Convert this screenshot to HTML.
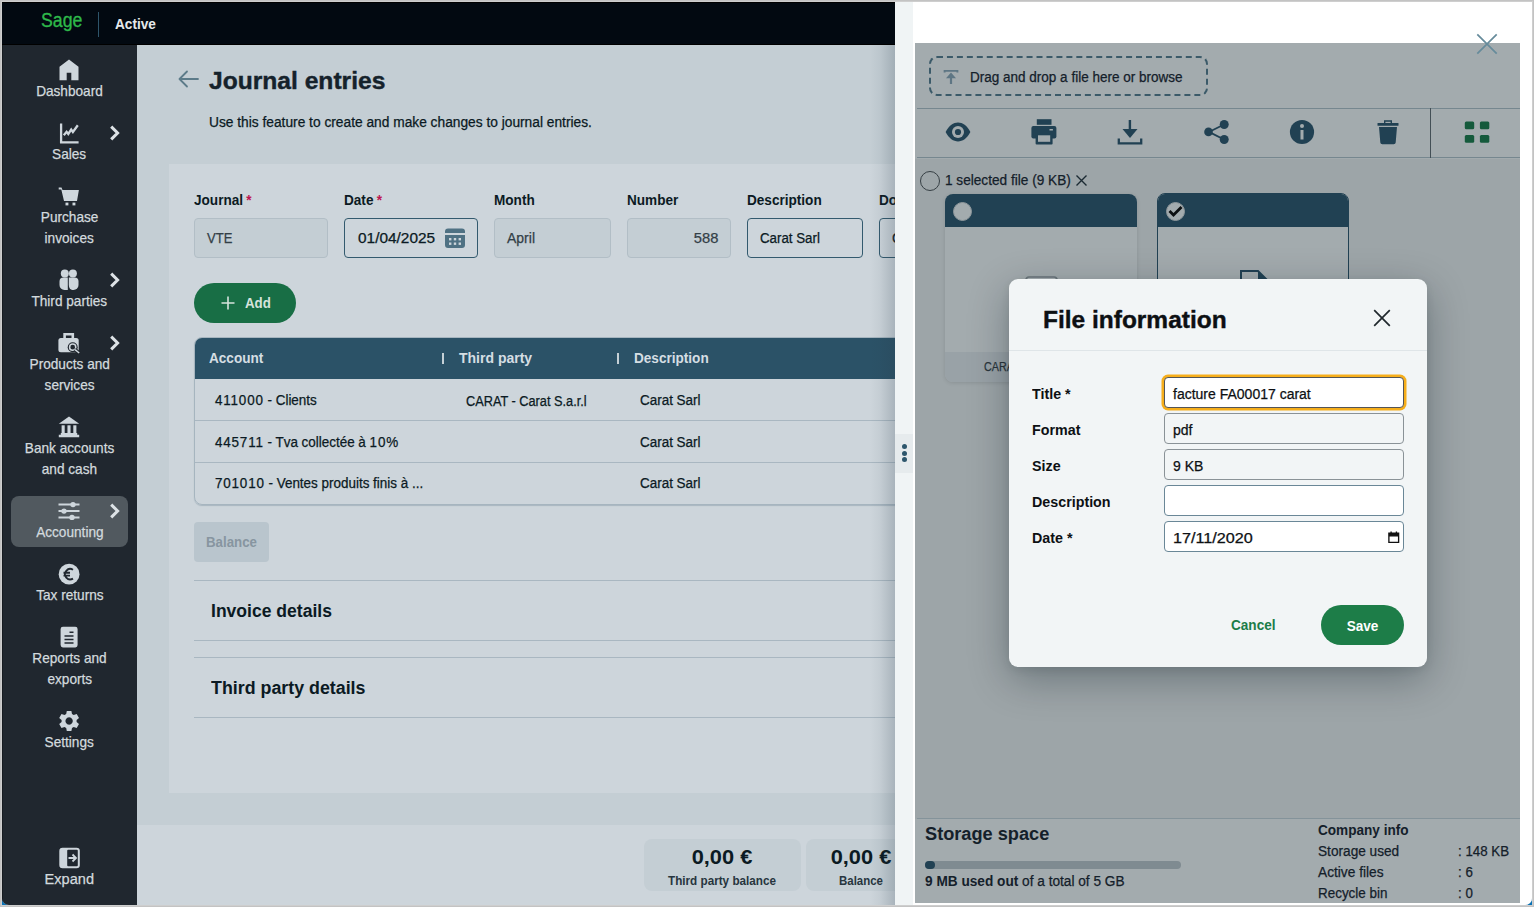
<!DOCTYPE html>
<html lang="en">
<head>
<meta charset="utf-8">
<title>Journal entries</title>
<style>
*{box-sizing:border-box;margin:0;padding:0}
html,body{width:1534px;height:907px;overflow:hidden;background:#c3c3c3}
body{font-family:"Liberation Sans",sans-serif;font-size:14px;color:#0b1a23;position:relative}
.abs{position:absolute}
.t{position:absolute;white-space:nowrap;transform-origin:0 50%;line-height:1}
.b{font-weight:bold}
#frame{position:absolute;left:1px;top:1px;width:1532px;height:905px;background:#cecece}
#app{position:absolute;left:2px;top:2px;width:1530px;height:903px;background:#c4ced4;overflow:hidden;border-radius:0 0 7px 7px}
.bc{position:absolute;top:897px;width:8px;height:8px;background:#0a72b5}
/* top bar */
#topbar{position:absolute;left:0;top:0;width:893px;height:43px;background:#020911;border-bottom:1px solid #000;border-top:1px solid #000}
/* sidebar */
#side{position:absolute;left:0;top:43px;width:135px;height:860px;background:#20272f;box-shadow:inset 1px 0 0 #161b20}
.nav{position:absolute;left:9px;width:117px;height:51px;border-radius:8px}
.nav.two{height:72px}
.nav.sel{background:#51595f}
.nav svg.ic{position:absolute;left:46.2px;top:3px;width:24px;height:24px;fill:#ced6dc}
.nav svg.ch{position:absolute;left:98px;top:7px;width:12px;height:16px}
.nav .lb{position:absolute;left:-9px;width:135px;top:26px;text-align:center;color:#d3dade;font-size:14.5px;line-height:21px}
.nav .lb span{-webkit-text-stroke:.25px currentColor;display:inline-block;transform:scaleX(.94);white-space:nowrap}

/* main */
#main{position:absolute;left:135px;top:43px;width:760px;height:860px;background:#c4ced4;overflow:hidden}
#card{position:absolute;left:32px;top:119px;width:760px;height:629px;background:#cdd5db}
#foot{position:absolute;left:0;top:780px;width:760px;height:80px;background:#cdd5db}
.tx{position:absolute;white-space:nowrap;height:20px;line-height:20px;margin-top:-10px;transform-origin:0 50%;transform:scaleX(var(--k,1))}
.tx{-webkit-text-stroke:.25px currentColor}
.tx.b,.tx b{-webkit-text-stroke:0}
.tx.hv{-webkit-text-stroke:.4px currentColor}
.tx.c{transform-origin:50% 50%;text-align:center}
.tx.r{transform-origin:100% 50%;text-align:right}
.inp{position:absolute;height:40px;border-radius:4px;border:1px solid #335a6e;background:#cdd5db}
.inp.dis{border-color:#b2bec6;background:#c4ced4}
.hl{position:absolute;height:1px;background:#a9b7c1}
.dg{letter-spacing:.85px}
.red{color:#bd1550;margin-left:-.5px}

#tbl{position:absolute;left:25px;top:173px;width:760px;height:168px;border:1px solid #a6b5bf;border-radius:8px;overflow:hidden;box-shadow:0 1px 1px rgba(60,90,110,.25)}
#tbl .hd{position:absolute;left:-1px;top:-1px;width:762px;height:42px;background:#2b5267;color:#d5dee3}
#tbl .rl{position:absolute;left:0;width:760px;height:1px;background:#a9b7c1}

/* drawer */
#drawer{position:absolute;left:893px;top:0;width:637px;height:903px;background:#fff}
#dshadow{position:absolute;left:868px;top:43px;width:25px;height:860px;background:linear-gradient(90deg,rgba(40,60,75,0) 0%,rgba(40,60,75,.05) 40%,rgba(40,60,75,.22) 100%)}
#strip{position:absolute;left:0;top:0;width:18px;height:903px;background:#f0f4f5}
#panel{position:absolute;left:20px;top:41px;width:605px;height:860px;background:#9da5a8;overflow:hidden;color:#14202a}
#ptop{position:absolute;left:0;top:0;width:605px;height:116px;background:#a3abae}
.pl{position:absolute;left:2px;width:603px;height:1px;background:#76878f}
.tb{position:absolute;top:78px;width:26px;height:26px;fill:#214153}
.fc{position:absolute;top:151px;width:192px;height:188px;border-radius:8px;background:#a3abae;overflow:hidden;box-shadow:0 1px 4px rgba(0,0,0,.12)}
.fc .h{position:absolute;left:0;top:0;width:100%;height:33px;background:#214153}
.fc .cap{position:absolute;left:0;bottom:0;width:100%;height:30px;background:#99a2a7}

/* modal */
#modal{position:absolute;left:114px;top:277px;width:418px;height:387.500px;background:#f2f5f6;border-radius:9px;box-shadow:0 12px 40px rgba(0,20,29,.32),0 3px 9px rgba(0,20,29,.08);color:#0d1013}
#modal .mi{position:absolute;left:155px;width:240px;height:31px;border:1px solid #6a8797;border-radius:4px;background:#fff}
#modal .mi.ro{background:#f2f5f6;border-color:#8a9297}
#modal .mi .tx{left:8px;top:15.500px}
#modal .ml{left:22.500px}
</style>
</head>
<body>
<div id="frame"></div>
<div class="bc" style="left:2px"></div><div class="bc" style="left:1524px"></div>
<div id="app">
  <div id="main">
    <svg class="abs" style="left:40px;top:24px;width:22px;height:20px" viewBox="0 0 22 20"><path d="M10 2.5 L2.5 10 L10 17.5 M2.5 10 H21" fill="none" stroke="#5c7b89" stroke-width="1.8" stroke-linecap="round" stroke-linejoin="round"/></svg>
    <div class="tx b hv" style="left:72px;top:36.400px;font-size:24px;height:30px;line-height:30px;margin-top:-15px;--k:1.025;color:#15222b">Journal entries</div>
    <div class="tx" style="left:72px;top:77px;--k:.982">Use this feature to create and make changes to journal entries.</div>
    <div id="card">
      <div class="tx b" style="left:25px;top:36px;--k:.97">Journal <span class="red">*</span></div>
      <div class="tx b" style="left:175px;top:36px;--k:.97">Date <span class="red">*</span></div>
      <div class="tx b" style="left:325px;top:36px;--k:.97">Month</div>
      <div class="tx b" style="left:458px;top:36px;--k:.97">Number</div>
      <div class="tx b" style="left:578px;top:36px;--k:.97">Description</div>
      <div class="tx b" style="left:710px;top:36px;--k:.97">Document</div>
      <div class="inp dis" style="left:25px;top:54px;width:134px"><div class="tx" style="left:12px;top:19px;color:#333f47;--k:.93">VTE</div></div>
      <div class="inp" style="left:175px;top:54px;width:134px"><div class="tx" style="left:12.500px;top:19px;--k:1.1">01/04/2025</div>
        <svg class="abs" style="left:100px;top:9px;width:20px;height:20px" viewBox="0 0 20 20"><path d="M3 0.5h14a3 3 0 0 1 3 3V5H0V3.500a3 3 0 0 1 3-3z M0 7h20v10a3 3 0 0 1-3 3H3a3 3 0 0 1-3-3z" fill="#4f7183"/><g fill="#cdd5db"><rect x="4" y="10" width="2.4" height="2.4"/><rect x="8.800" y="10" width="2.4" height="2.4"/><rect x="13.600" y="10" width="2.4" height="2.4"/><rect x="4" y="14.500" width="2.4" height="2.4"/><rect x="8.800" y="14.500" width="2.4" height="2.4"/><rect x="13.600" y="14.500" width="2.4" height="2.4"/></g></svg>
      </div>
      <div class="inp dis" style="left:325px;top:54px;width:117px"><div class="tx" style="left:12px;top:19px;color:#333f47">April</div></div>
      <div class="inp dis" style="left:458px;top:54px;width:104px"><div class="tx r" style="right:12px;top:19px;color:#333f47;--k:1.05">588</div></div>
      <div class="inp" style="left:578px;top:54px;width:116px"><div class="tx" style="left:12px;top:19px;--k:.95">Carat Sarl</div></div>
      <div class="inp" style="left:710px;top:54px;width:116px"><div class="tx" style="left:12px;top:19px">Carat</div></div>
      <div class="abs" style="left:25px;top:119px;width:102px;height:40px;border-radius:20px;background:#186e45">
        <svg class="abs" style="left:27px;top:13px;width:14px;height:14px" viewBox="0 0 14 14"><path d="M7 0.500V13.500M0.500 7H13.500" stroke="#d6e3dc" stroke-width="1.6" fill="none"/></svg>
        <div class="tx b" style="left:51px;top:20px;color:#d6e3dc;--k:.95">Add</div>
      </div>
      <div id="tbl">
        <div class="hd">
          <div class="tx b" style="left:14.500px;top:21px;--k:.97">Account</div>
          <div class="abs" style="left:248px;top:16px;width:2px;height:11px;background:#c5d0d6"></div>
          <div class="tx b" style="left:265px;top:21px;--k:1">Third party</div>
          <div class="abs" style="left:423px;top:16px;width:2px;height:11px;background:#c5d0d6"></div>
          <div class="tx b" style="left:440px;top:21px;--k:.97">Description</div>
        </div>
        <div class="tx" style="left:19.500px;top:61.700px;--k:.96"><span class="dg">411000</span> - Clients</div>
        <div class="tx" style="left:270.500px;top:62.700px;--k:.91">CARAT - Carat S.a.r.l</div>
        <div class="tx" style="left:445px;top:61.700px;--k:.96">Carat Sarl</div>
        <div class="rl" style="top:82px"></div>
        <div class="tx" style="left:19.500px;top:103.500px;--k:.96"><span class="dg">445711</span> - Tva collectée à <span class="dg">10</span>%</div>
        <div class="tx" style="left:445px;top:103.500px;--k:.96">Carat Sarl</div>
        <div class="rl" style="top:124px"></div>
        <div class="tx" style="left:19.500px;top:145.400px;--k:.96"><span class="dg">701010</span> - Ventes produits finis à ...</div>
        <div class="tx" style="left:445px;top:145.400px;--k:.96">Carat Sarl</div>
      </div>
      <div class="abs" style="left:25px;top:358px;width:75px;height:40px;border-radius:4px;background:#b9c5cd"><div class="tx b" style="left:12px;top:20px;color:#8795a0;--k:.95">Balance</div></div>
      <div class="hl" style="left:25px;top:416px;width:740px"></div>
      <div class="tx b" style="left:42px;top:447px;font-size:18px;height:24px;line-height:24px;margin-top:-12px;--k:.975">Invoice details</div>
      <div class="hl" style="left:25px;top:476px;width:740px"></div>
      <div class="hl" style="left:25px;top:493px;width:740px"></div>
      <div class="tx b" style="left:42px;top:524px;font-size:18px;height:24px;line-height:24px;margin-top:-12px;--k:.99">Third party details</div>
      <div class="hl" style="left:25px;top:553px;width:740px"></div>
    </div>
    <div id="foot">
      <div class="abs" style="left:507px;top:14px;width:157px;height:52px;border-radius:8px;background:#c4ced4">
        <div class="tx b c" style="left:0;width:156px;top:18px;font-size:20px;height:26px;line-height:26px;margin-top:-13px;--k:1.09">0,00 €</div>
        <div class="tx b c" style="left:0;width:156px;top:42px;font-size:12px;color:#27353e;--k:.975">Third party balance</div>
      </div>
      <div class="abs" style="left:669px;top:14px;width:110px;height:52px;border-radius:8px;background:#c4ced4">
        <div class="tx b c" style="left:0;width:110px;top:18px;font-size:20px;height:26px;line-height:26px;margin-top:-13px;--k:1.09">0,00 €</div>
        <div class="tx b c" style="left:0;width:110px;top:42px;font-size:12px;color:#27353e;--k:.955">Balance</div>
      </div>
    </div>
  </div>
  <div id="topbar">
    <div class="tx" style="left:38.800px;top:17.200px;font-size:20px;height:30px;line-height:30px;margin-top:-15px;color:#2eb84a;--k:.885;-webkit-text-stroke:.35px #2eb84a">Sage</div>
    <div class="abs" style="left:96px;top:9px;width:1px;height:25px;background:#2e556b"></div>
    <div class="tx b" style="left:113px;top:21px;color:#e6e9eb;font-size:14.5px;--k:.94">Active</div>
  </div>
  <div id="side">
    <div class="nav" style="top:10px"><svg class="ic" viewBox="0 0 24 24"><path d="M12 1.500 L21.500 8.700 V22.300 H14.300 V14.700 H9.700 V22.300 H2.500 V8.700 Z"/></svg><div class="lb"><span>Dashboard</span><br></div></div>
    <div class="nav" style="top:73px"><svg class="ic" viewBox="0 0 24 24"><path d="M4.100 2.600 V21.300 H21.600" fill="none" stroke="#ced6dc" stroke-width="2.300"/><path d="M6.800 14.300 L9.600 10.800 L11.300 13 L14.200 8.600 L15.900 11 L20.800 4.300" fill="none" stroke="#ced6dc" stroke-width="2.300"/></svg><svg class="ch" viewBox="0 0 12 16"><path d="M2.200 1.600 L8.600 8 L2.200 14.400" fill="none" stroke="#dde2e6" stroke-width="3"/></svg><div class="lb"><span>Sales</span><br></div></div>
    <div class="nav two" style="top:136px"><svg class="ic" viewBox="0 0 24 24"><path d="M1.700 3.500 H4.500 L5.500 6 H21.900 L20 17 H7 L4.300 5.500 H1.700 Z"/><rect x="8.500" y="18.600" width="2.900" height="2.800"/><rect x="15.500" y="18.600" width="2.900" height="2.800"/></svg><div class="lb"><span>Purchase</span><br><span>invoices</span><br></div></div>
    <div class="nav" style="top:220px"><svg class="ic" viewBox="0 0 24 24"><circle cx="7.800" cy="5.500" r="4"/><circle cx="15.900" cy="5.500" r="4"/><path d="M2.500 13.500 a4 4 0 0 1 4-4 h4.300 v12.500 h-3.300 a5 5 0 0 1-5-5 z"/><path d="M11.800 9.500 h5.700 a4 4 0 0 1 4 4 v3.500 a5 5 0 0 1-5 5 h-1.200 a3.500 5 0 0 1-3.500-5 z"/></svg><svg class="ch" viewBox="0 0 12 16"><path d="M2.200 1.600 L8.600 8 L2.200 14.400" fill="none" stroke="#dde2e6" stroke-width="3"/></svg><div class="lb"><span>Third parties</span><br></div></div>
    <div class="nav two" style="top:283px"><svg class="ic" viewBox="0 0 24 24"><path d="M6.300 2 h10.800 v6 h-2.600 v-3.500 h-5.600 v3.500 h-2.600 z"/><rect x="1.400" y="7" width="20.300" height="14.300" rx="2.500"/><circle cx="15.700" cy="16.200" r="5" fill="#20272f"/><circle cx="15.700" cy="16.200" r="3.100" fill="none" stroke="#ced6dc" stroke-width="1.500"/><path d="M17.800 18.500 L22.300 22.200" stroke="#20272f" stroke-width="3.800"/><path d="M18 18.600 L22.200 22" stroke="#ced6dc" stroke-width="1.500"/></svg><svg class="ch" viewBox="0 0 12 16"><path d="M2.200 1.600 L8.600 8 L2.200 14.400" fill="none" stroke="#dde2e6" stroke-width="3"/></svg><div class="lb"><span>Products and</span><br><span>services</span><br></div></div>
    <div class="nav two" style="top:367px"><svg class="ic" viewBox="0 0 24 24"><path d="M12 1.500 L22.200 8.800 H1.800 Z"/><rect x="4.600" y="10.300" width="3.100" height="7.700"/><rect x="10.450" y="10.300" width="3.100" height="7.700"/><rect x="16.300" y="10.300" width="3.100" height="7.700"/><path d="M3.800 18 h16.400 v1.700 h2 v2.600 H1.800 v-2.600 h2 z"/></svg><div class="lb"><span>Bank accounts</span><br><span>and cash</span><br></div></div>
    <div class="nav sel" style="top:451px"><svg class="ic" viewBox="0 0 24 24"><path d="M1.500 5.600 H22.500 M1.500 12.100 H22.500 M1.500 18.400 H22.500" stroke="#ced6dc" stroke-width="2" fill="none"/><circle cx="16" cy="5.600" r="2.700"/><circle cx="7" cy="12.100" r="2.700"/><circle cx="15" cy="18.400" r="2.700"/></svg><svg class="ch" viewBox="0 0 12 16"><path d="M2.200 1.600 L8.600 8 L2.200 14.400" fill="none" stroke="#dde2e6" stroke-width="3"/></svg><div class="lb"><span>Accounting</span><br></div></div>
    <div class="nav" style="top:514px"><svg class="ic" viewBox="0 0 24 24"><circle cx="12.100" cy="12.200" r="10.400"/><path d="M16 7.800 a5.200 5.200 0 1 0 0 8.800 M6.500 10.800 h6.500 M6.500 13.600 h6.500" fill="none" stroke="#20272f" stroke-width="1.900"/></svg><div class="lb"><span>Tax returns</span><br></div></div>
    <div class="nav two" style="top:577px"><svg class="ic" viewBox="0 0 24 24"><rect x="3.600" y="1.800" width="17" height="20.600" rx="2.300"/><path d="M12.500 7.300 h4 M7.500 11 h9 M7.500 14.500 h9 M7.500 18 h9" stroke="#20272f" stroke-width="1.500"/></svg><div class="lb"><span>Reports and</span><br><span>exports</span><br></div></div>
    <div class="nav" style="top:661px"><svg class="ic" viewBox="0 0 24 24"><path d="M9.800 1.900 h4.600 l.6 3.100 l1.700 1 l3-1.100 l2.300 4 l-2.400 2.100 v2 l2.400 2.100 l-2.300 4 l-3-1.100 l-1.700 1 l-.6 3.100 h-4.600 l-.6-3.100 l-1.700-1 l-3 1.100 l-2.300-4 l2.400-2.100 v-2 l-2.400-2.100 l2.300-4 l3 1.100 l1.700-1 z M12.100 8.300 a3.700 3.700 0 1 0 0.010 0 z" fill-rule="evenodd"/></svg><div class="lb"><span>Settings</span><br></div></div>
    <div class="nav" style="top:798px"><svg class="ic" viewBox="0 0 24 24"><rect x="2.300" y="1.800" width="20.500" height="20.400" rx="3.200"/><rect x="10.200" y="3.800" width="10.600" height="16.400" rx="1" fill="#20272f"/><path d="M11.500 12 h7 M15.500 8.500 l3.500 3.500 l-3.500 3.500" stroke="#ced6dc" stroke-width="1.800" fill="none"/></svg><div class="lb" style="font-size:15.5px;top:24.500px"><span>Expand</span><br></div></div>
    </div>
  <div id="dshadow"></div>
  <div id="drawer">
    <div id="strip">
      <div class="abs" style="left:0;top:432px;width:18px;height:39px;background:#e6ebed"></div>
      <div class="abs" style="left:6.500px;top:441.500px;width:5px;height:5px;border-radius:50%;background:#2d566c"></div>
      <div class="abs" style="left:6.500px;top:448.500px;width:5px;height:5px;border-radius:50%;background:#2d566c"></div>
      <div class="abs" style="left:6.500px;top:455.300px;width:5px;height:5px;border-radius:50%;background:#2d566c"></div>
    </div>
    <div id="panel">
      <div id="ptop"></div>
      <div class="abs" style="left:14px;top:13px;width:279px;height:40px;border:2px dashed #3b5a69;border-radius:8px"></div>
      <svg class="abs" style="left:28px;top:26px;width:16px;height:16px" viewBox="0 0 16 16"><path d="M1.600 3.600 V1.900 H14.400 V3.600" fill="none" stroke="#5e7684" stroke-width="1.900"/><path d="M8 3.600 L13 9.300 H9.100 V15 H6.900 V9.300 H3 Z" fill="#5e7684"/></svg>
      <div class="tx" style="left:54.500px;top:34px;--k:.965">Drag and drop a file here or browse</div>
      <div class="pl" style="top:65px"></div>
      <div class="pl" style="top:114px"></div>
      <div class="abs" style="left:515px;top:65px;width:1px;height:50px;background:#434f56"></div>
      <svg class="abs" style="left:28px;top:74.1px;width:30px;height:30px" viewBox="0 0 30 30" fill="#214153"><path d="M2.600 15 C6 8.500 10.500 5.600 15 5.600 S24 8.500 27.400 15 C24 21.500 19.500 24.400 15 24.400 S6 21.500 2.600 15 Z"/><circle cx="15" cy="15" r="6" fill="#a3abae"/><circle cx="15" cy="15" r="3.100"/></svg>
      <svg class="abs" style="left:114px;top:74.1px;width:30px;height:30px" viewBox="0 0 30 30" fill="#214153"><rect x="7.800" y="2.200" width="14.700" height="5.600"/><rect x="2.400" y="9" width="25" height="12.500" rx="2"/><rect x="20.500" y="12" width="3.400" height="1.500" fill="#a3abae"/><rect x="6.600" y="16" width="17" height="11.500" rx="1"/><rect x="9" y="18.300" width="12.200" height="6.500" fill="#a3abae"/></svg>
      <svg class="abs" style="left:200px;top:74.1px;width:30px;height:30px" viewBox="0 0 30 30" fill="#214153"><rect x="13.700" y="3" width="2.400" height="10"/><path d="M7.500 12 H22.500 L15 21 Z"/><path d="M3.800 21.500 V26.300 H26.200 V21.500" fill="none" stroke="#214153" stroke-width="2.300"/></svg>
      <svg class="abs" style="left:286px;top:74.1px;width:30px;height:30px" viewBox="0 0 30 30" fill="#214153"><path d="M23 7.500 L8 14.900 L23 22.500" fill="none" stroke="#214153" stroke-width="1.800"/><circle cx="7.500" cy="14.900" r="4.300"/><circle cx="23.200" cy="7.500" r="4.500"/><circle cx="23.200" cy="22.500" r="4.500"/></svg>
      <svg class="abs" style="left:371.8px;top:74.1px;width:30px;height:30px" viewBox="0 0 30 30" fill="#214153"><circle cx="15" cy="15" r="12.100"/><circle cx="15" cy="9" r="2" fill="#a3abae"/><rect x="13.500" y="13" width="3" height="9.500" fill="#a3abae"/></svg>
      <svg class="abs" style="left:457.5px;top:74.1px;width:30px;height:30px" viewBox="0 0 30 30" fill="#214153"><path d="M11 3.300 h8 v2.800 h-1.400 v-1.400 h-5.200 v1.400 h-1.400 z"/><rect x="4.500" y="6" width="21" height="2.800" rx=".5"/><path d="M6 10 H24 L22.700 25.500 a2 2 0 0 1-2 1.800 H9.300 a2 2 0 0 1-2-1.800 Z"/></svg>
      <svg class="abs" style="left:547px;top:74.1px;width:30px;height:30px" viewBox="0 0 30 30" fill="#214153"><g fill="#155a3c"><rect x="2.800" y="4.400" width="9.400" height="7.800" rx="1.500"/><rect x="17.900" y="4.400" width="9.400" height="7.800" rx="1.500"/><rect x="2.800" y="17.900" width="9.400" height="7.800" rx="1.500"/><rect x="17.900" y="17.900" width="9.400" height="7.800" rx="1.500"/></g></svg>
      <div class="abs" style="left:5px;top:128px;width:20px;height:20px;border-radius:50%;border:1px solid #363f44"></div>
      <div class="tx" style="left:30px;top:137px;font-size:14.5px;--k:.94">1 selected file (9 KB)</div>
      <svg class="abs" style="left:160px;top:131px;width:13px;height:13px" viewBox="0 0 13 13"><path d="M1.500 1.500 L11.500 11.500 M11.500 1.500 L1.500 11.500" stroke="#1c2a33" stroke-width="1.400" fill="none"/></svg>
      <div class="fc" style="left:30px"><div class="h"></div>
        <div class="abs" style="left:7.500px;top:7.500px;width:19.500px;height:19.500px;border-radius:50%;background:#a3abae;border:1px solid #8e979b"></div>
        <div class="cap"><div class="tx" style="left:38.500px;top:14.500px;font-size:12.500px;color:#2a353c;--k:.86">CARAT Carat</div></div>
      </div>
      <div class="fc" style="left:242px;top:150px;border:1px solid #214153;box-shadow:none"><div class="h"></div>
        <div class="abs" style="left:7.500px;top:7.500px;width:19.500px;height:19.500px;border-radius:50%;background:#a3abae;border:1px solid #8e979b"></div>
        <svg class="abs" style="left:10px;top:11px;width:15px;height:12px" viewBox="0 0 15 12"><path d="M1.500 6 L5.500 10 L13.500 2" fill="none" stroke="#0c0f11" stroke-width="2.800"/></svg>
        <svg class="abs" style="left:82px;top:76px;width:30px;height:36px" viewBox="0 0 30 36"><path d="M1 1 H18 L29 12 V35 H1 Z" fill="#a3abae" stroke="#214153" stroke-width="2"/><path d="M18 1 V12 H29 Z" fill="#214153"/></svg>
      </div>
      <svg class="abs" style="left:109.500px;top:233px;width:33px;height:26px" viewBox="0 0 33 26"><rect x="1" y="1" width="31" height="24" rx="3" fill="#a9b1b4" stroke="#6b767c" stroke-width="1.500"/><path d="M2 3 L16.500 15 L31 3" fill="none" stroke="#6b767c" stroke-width="1.500"/></svg>
      <div class="pl" style="top:775px;left:2px;width:603px;background:#84939a"></div>
      <div class="abs" style="left:0;top:776px;width:605px;height:84px;background:#a3abae"></div>
      <div class="tx b" style="left:10px;top:791px;font-size:18px;height:24px;line-height:24px;margin-top:-12px;--k:1.01">Storage space</div>
      <div class="abs" style="left:10px;top:818px;width:256px;height:8px;border-radius:4px;background:#7f8b91"></div>
      <div class="abs" style="left:10px;top:818px;width:10px;height:8px;border-radius:4px;background:#214153"></div>
      <div class="tx" style="left:10px;top:838px;--k:.975"><b>9 MB used out</b> of a total of 5 GB</div>
      <div class="tx b" style="left:403px;top:787px;--k:.97">Company info</div>
      <div class="tx" style="left:403px;top:808px;--k:.975">Storage used</div>
      <div class="tx" style="left:403px;top:829px;--k:.98">Active files</div>
      <div class="tx" style="left:403px;top:850px;--k:.96">Recycle bin</div>
      <div class="tx" style="left:543px;top:808px;--k:.95">: 148 KB</div>
      <div class="tx" style="left:543px;top:829px;--k:.95">: 6</div>
      <div class="tx" style="left:543px;top:850px;--k:.95">: 0</div>
    </div>
    <svg class="abs" style="left:580px;top:30px;width:24px;height:24px" viewBox="0 0 24 24"><path d="M2.300 2.300 L21.700 21.700 M21.700 2.300 L2.300 21.700" stroke="#668b9b" stroke-width="1.700" fill="none"/></svg>
    <div id="modal">
      <div class="tx b hv" style="left:34px;top:41px;font-size:24px;height:30px;line-height:30px;margin-top:-15px;--k:1.02">File information</div>
      <svg class="abs" style="left:363px;top:29px;width:20px;height:20px" viewBox="0 0 20 20"><path d="M2.200 2.200 L17.800 17.800 M17.800 2.200 L2.200 17.800" stroke="#20282d" stroke-width="1.700" fill="none"/></svg>
      <div class="abs" style="left:0;top:71px;width:418px;height:1px;background:#dfe5e8"></div>
      <div class="tx b ml" style="top:114.9px;--k:1.02">Title *</div>
      <div class="tx b ml" style="top:150.9px;--k:1.02">Format</div>
      <div class="tx b ml" style="top:186.9px;--k:1.02">Size</div>
      <div class="tx b ml" style="top:222.9px;--k:1.02">Description</div>
      <div class="tx b ml" style="top:258.9px;--k:1.02">Date *</div>
      <div class="mi" style="top:98px;border-color:#555;box-shadow:0 0 0 2.500px #f6ae1b"><div class="tx">facture FA00017 carat</div></div>
      <div class="mi ro" style="top:134px"><div class="tx">pdf</div></div>
      <div class="mi ro" style="top:170px"><div class="tx">9 KB</div></div>
      <div class="mi" style="top:206px"></div>
      <div class="mi" style="top:242px"><div class="tx" style="--k:1.155">17/11/2020</div>
        <svg class="abs" style="left:223px;top:9px;width:11.500px;height:12.400px" viewBox="0 0 13 14"><path d="M1 2.500 h11 v10.500 h-11 z M1 5.500 h11" fill="none" stroke="#111" stroke-width="1.500"/><path d="M3.500 0.500 v2 M9.500 0.500 v2" stroke="#111" stroke-width="1.500"/><rect x="1" y="2.500" width="11" height="3" fill="#111"/></svg>
      </div>
      <div class="tx b" style="left:222px;top:346.300px;color:#1b7c49;--k:.97">Cancel</div>
      <div class="abs" style="left:312px;top:325.500px;width:83px;height:40px;border-radius:20px;background:#1d7d48"><div class="tx b c" style="left:0;width:83px;top:21.300px;color:#fff;--k:.97">Save</div></div>
    </div>
  </div>
</div>
</body>
</html>
